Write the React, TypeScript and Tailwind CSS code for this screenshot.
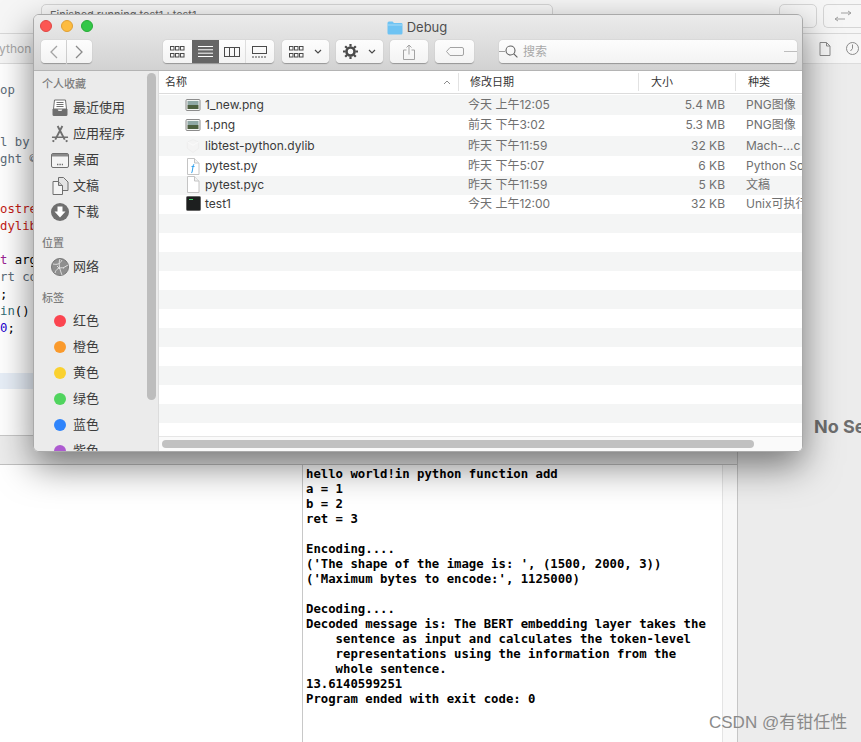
const rows = [
  { name: "1_new.png", date: "今天 上午12:05", size: "5.4 MB", kind: "PNG图像", icon: "img", h: "h-[20px]", alt: true },
  { name: "1.png", date: "前天 下午3:02", size: "5.3 MB", kind: "PNG图像", icon: "img", h: "h-[21px] pb-[2px]", alt: false },
  { name: "libtest-python.dylib", date: "昨天 下午11:59", size: "32 KB", kind: "Mach-…c", icon: "lib", h: "h-[20px]", alt: true },
  { name: "pytest.py", date: "昨天 下午5:07", size: "6 KB", kind: "Python So", icon: "py", h: "h-[20px]", alt: false },
  { name: "pytest.pyc", date: "昨天 下午11:59", size: "5 KB", kind: "文稿", icon: "doc", h: "h-[19px] pb-[2px]", alt: true },
  { name: "test1", date: "今天 上午12:00", size: "32 KB", kind: "Unix可执行", icon: "term", h: "h-[19px] pb-[2px]", alt: false },
]

const tags = [
  { label: "红色", color: "bg-[#fb4550]" },
  { label: "橙色", color: "bg-[#fa9a2c]" },
  { label: "黄色", color: "bg-[#fad12f]" },
  { label: "绿色", color: "bg-[#50d45e]" },
  { label: "蓝色", color: "bg-[#2f84fb]" },
  { label: "紫色", color: "bg-[#ad5bd0]" },
]

const FileIcon = ({ type }: { type: string }) => {
  if (type === "img")
    return (
      <svg width="16" height="14" viewBox="0 0 16 14">
        <rect x="1" y="1.5" width="14" height="11" rx="1" fill="#f2f2f2" stroke="#8c8c8c" />
        <rect x="2.5" y="3" width="11" height="4" fill="#8fa7a5" />
        <rect x="2.5" y="7" width="11" height="4" fill="#4d5f3f" />
      </svg>
    )
  if (type === "lib")
    return (
      <svg width="20" height="18" viewBox="0 0 20 18">
        <path d="M10 1l7 3v8l-7 5-7-5V4z" fill="#f4f4f4" stroke="#ececec" />
        <path d="M3 4l7 4 7-4" fill="none" stroke="#fbfbfb" />
      </svg>
    )
  if (type === "term")
    return (
      <svg width="15" height="15" viewBox="0 0 15 15">
        <rect x="0.5" y="0.5" width="14" height="14" rx="1" fill="#1d1f1f" stroke="#666" />
        <rect x="3" y="3" width="4" height="1" fill="#45d36a" />
      </svg>
    )
  return (
    <svg width="14" height="17" viewBox="0 0 14 17">
      <path d="M1.5.5h7l4.500 4.500v11.500h-11.500z" fill="#fff" stroke="#c4c4c4" />
      <path d="M8.500.5v4.500h4.500" fill="#f2f2f2" stroke="#c4c4c4" />
      {type === "py" && <path d="M8.200 6.500c-1 0-1 1-1.200 2l-.8 5c-.1.8-.4 1.200-1 1.200M5.500 8.500h3" fill="none" stroke="#3aa6ee" strokeWidth="1.100" />}
    </svg>
  )
}

const SideIcon = ({ type }: { type: string }) => {
  const c = "#6f6f6f"
  if (type === "recent")
    return (
      <svg width="18" height="18" viewBox="0 0 18 18">
        <path d="M3.500 1h11l1 9h-13z" fill="#fff" stroke={c} />
        <path d="M5.500 3.500h7M5.500 5.500h7M5.500 7.500h7" stroke={c} />
        <path d="M1.500 10h5l1 2h3l1-2h5v5.500a1.500 1.500 0 0 1-1.500 1.500h-12a1.500 1.500 0 0 1-1.500-1.500z" fill={c} />
      </svg>
    )
  if (type === "apps")
    return (
      <svg width="19" height="18" viewBox="0 0 19 18">
        <path d="M7 0.500l7.500 14.500M12 0.500L4.500 15" stroke={c} strokeWidth="2" />
        <path d="M1 12.500h17" stroke={c} strokeWidth="1.600" />
        <circle cx="2.500" cy="16.500" r="1.200" fill={c} />
        <circle cx="16.500" cy="16.500" r="1.200" fill={c} />
      </svg>
    )
  if (type === "desktop")
    return (
      <svg width="18" height="15" viewBox="0 0 18 15">
        <rect x="0.5" y="0.5" width="17" height="14" rx="1.500" fill="#f4f4f4" stroke={c} />
        <rect x="1" y="1" width="16" height="2.500" fill="#8a8a8a" />
        <path d="M6 11.500h6" stroke={c} strokeWidth="1.400" strokeDasharray="1.400 1" />
      </svg>
    )
  if (type === "docs")
    return (
      <svg width="17" height="18" viewBox="0 0 17 18">
        <path d="M6.500.5h5l4.500 4.500v8.500h-9.500z" fill="#e4e4e4" stroke={c} />
        <path d="M1 4.500h5.500l4 4v9h-9.500z" fill="#f4f4f4" stroke={c} />
        <path d="M6.500 4.500v4h4" fill="#ccc" stroke={c} />
      </svg>
    )
  if (type === "down")
    return (
      <svg width="18" height="18" viewBox="0 0 18 18">
        <circle cx="9" cy="9" r="9" fill={c} />
        <path d="M6.500 3.500h5v5h3L9 14.500 3.500 8.500h3z" fill="#fff" />
      </svg>
    )
  return (
    <svg width="18" height="18" viewBox="0 0 18 18">
      <circle cx="9" cy="9" r="8.500" fill="#8f8f8f" stroke="#777" />
      <path d="M2 6c4 1 7 0 9-4M4 15c1-4 4-6 9-5M9 1c-2 5 0 11 2 16M12 10l5-3M6 8l3 3" fill="none" stroke="#e6e6e6" strokeWidth="0.9" />
    </svg>
  )
}

const Favorite = ({ type, label }: { type: string; label: string }) => (
  <div className="h-[26px] flex items-center pl-[17px] gap-[4px] text-[13px] text-[#3c3c3c]">
    <div className="w-[18px] h-[18px] flex items-center justify-center">
      <SideIcon type={type} />
    </div>
    <span>{label}</span>
  </div>
)

const Sidebar = () => (
  <div className="w-[125px] h-full relative bg-[#ebebeb] border-r border-[#dcdcdc] overflow-hidden shrink-0">
    <div className="pt-[5px] pl-[8px] text-[11px] leading-[16px] font-medium text-[#7d7d7d]">个人收藏</div>
    <div className="mt-[3px]">
      <Favorite type="recent" label="最近使用" />
      <Favorite type="apps" label="应用程序" />
      <Favorite type="desktop" label="桌面" />
      <Favorite type="docs" label="文稿" />
      <Favorite type="down" label="下载" />
    </div>
    <div className="mt-[10px] pl-[8px] text-[11px] leading-[16px] font-medium text-[#7d7d7d]">位置</div>
    <div className="mt-[3px]">
      <Favorite type="net" label="网络" />
    </div>
    <div className="mt-[10px] pl-[8px] text-[11px] leading-[16px] font-medium text-[#7d7d7d]">标签</div>
    <div className="mt-[2px]">
      {tags.map((t) => (
        <div key={t.label} className="h-[26px] flex items-center pl-[20px] gap-[7px] text-[13px] text-[#3c3c3c]">
          <div className={`w-[12px] h-[12px] rounded-full ${t.color}`}></div>
          <span>{t.label}</span>
        </div>
      ))}
    </div>
    <div className="absolute left-[113px] top-[2px] w-[9px] h-[327px] rounded-full bg-[#bdbdbd]"></div>
  </div>
)

const ToolBtn = ({ className, children }: { className: string; children?: React.ReactNode }) => (
  <div className={`h-[23px] bg-gradient-to-b from-[#fdfdfd] to-[#f3f3f3] rounded-[4px] shadow-[0_0.5px_1px_rgba(0,0,0,0.3)] flex items-center justify-center shrink-0 ${className}`}>
    {children}
  </div>
)

const Grid = ({ color = "#4a4a4a" }: { color?: string }) => (
  <svg width="15" height="12" viewBox="0 0 15 12" fill="none" stroke={color}>
    {[0.5, 5.5, 10.5].map((x) => [0.5, 7.5].map((y) => <rect key={`${x}${y}`} x={x} y={y} width="3.500" height="3.500" />))}
  </svg>
)

const Chevron = () => (
  <svg width="8" height="5" viewBox="0 0 8 5" fill="none" stroke="#4a4a4a" strokeWidth="1.200">
    <path d="M1 1l3 3 3-3" />
  </svg>
)

const Gear = () => (
  <svg width="15" height="15" viewBox="0 0 15 15">
    <circle cx="7.500" cy="7.500" r="4" fill="none" stroke="#4a4a4a" strokeWidth="2.600" />
    <path d="M7.500 0v15M0 7.500h15M2.200 2.200l10.600 10.600M12.800 2.200L2.200 12.800" stroke="#4a4a4a" strokeWidth="2.200" strokeDasharray="2.600 9.800" />
  </svg>
)

const FinderToolbar = () => (
  <div className="h-[56px] bg-gradient-to-b from-[#ebebeb] to-[#d2d2d2] border-b border-[#b4b4b4] shrink-0">
    <div className="h-[24px] relative flex items-center justify-center gap-[4px] text-[13px] text-[#4f4f4f] pr-[2px]">
      <div className="absolute left-[6px] top-[5px] w-[12px] h-[12px] rounded-full bg-[#fc5753] border border-[#df4744]"></div>
      <div className="absolute left-[27px] top-[5px] w-[12px] h-[12px] rounded-full bg-[#fdbc40] border border-[#de9f34]"></div>
      <div className="absolute left-[47px] top-[5px] w-[12px] h-[12px] rounded-full bg-[#33c748] border border-[#27aa35]"></div>
      <svg width="16" height="14" viewBox="0 0 16 14" className="mt-[2px]">
        <path d="M0.5 2a1.500 1.500 0 0 1 1.500-1.500h3.500l1.500 1.500h7.500a1.500 1.500 0 0 1 1 1v9a1.500 1.500 0 0 1-1.500 1.500h-12a1.500 1.500 0 0 1-1.500-1.500z" fill="#6ec3f3" />
        <path d="M0.5 4h15" stroke="#a6dcf8" />
      </svg>
      <span className="mt-[2px]">Debug</span>
    </div>
    <div className="flex items-center pl-[7px] h-[25px]">
      <ToolBtn className="w-[25px] rounded-r-none">
        <svg width="9" height="14" viewBox="0 0 9 14" fill="none" stroke="#a3a3a3" strokeWidth="1.300"><path d="M8 1L2 7l6 6" /></svg>
      </ToolBtn>
      <ToolBtn className="w-[25px] ml-[1px] rounded-l-none">
        <svg width="9" height="14" viewBox="0 0 9 14" fill="none" stroke="#8a8a8a" strokeWidth="1.300"><path d="M1 1l6 6-6 6" /></svg>
      </ToolBtn>
      <ToolBtn className="w-[111px] ml-[71px] !justify-start overflow-hidden">
        <div className="w-[29px] h-full flex items-center justify-center"><Grid /></div>
        <div className="w-[27px] h-full flex items-center justify-center bg-[#666]">
          <svg width="15" height="11" viewBox="0 0 15 11" stroke="#fff"><path d="M0 .5h15M0 3.800h15M0 7.200h15M0 10.500h15" /></svg>
        </div>
        <div className="w-[27px] h-full flex items-center justify-center border-r border-[#dedede]">
          <svg width="16" height="10" viewBox="0 0 16 10" fill="none" stroke="#4a4a4a"><rect x="0.5" y="0.5" width="15" height="9" /><path d="M5.500 0v10M10.500 0v10" /></svg>
        </div>
        <div className="w-[27px] h-full flex items-center justify-center">
          <svg width="15" height="12" viewBox="0 0 15 12" fill="none" stroke="#4a4a4a"><rect x="0.5" y="0.5" width="14" height="7" /><path d="M0 11h15" strokeDasharray="2 1" /></svg>
        </div>
      </ToolBtn>
      <ToolBtn className="w-[47px] ml-[8px] gap-[10px]"><Grid /><Chevron /></ToolBtn>
      <ToolBtn className="w-[47px] ml-[7px] gap-[10px]"><Gear /><Chevron /></ToolBtn>
      <ToolBtn className="w-[38px] ml-[7px]">
        <svg width="12" height="16" viewBox="0 0 12 16" fill="none" stroke="#a3a3a3"><path d="M3.500 6H.5v9.500h11V6h-3M6 10.500V1M3.500 3.500L6 1l2.500 2.500" /></svg>
      </ToolBtn>
      <ToolBtn className="w-[39px] ml-[7px]">
        <svg width="18" height="9" viewBox="0 0 18 9" fill="none" stroke="#a3a3a3"><path d="M4 .5h12a1.500 1.500 0 0 1 1.500 1.500v5a1.500 1.500 0 0 1-1.500 1.500H4L.5 4.500z" /></svg>
      </ToolBtn>
      <ToolBtn className="w-[298px] ml-[25px] !justify-start relative">
        <div className="absolute left-0 top-[11px] w-[6px] h-px bg-[#9d9d9d]"></div>
        <div className="absolute right-0 top-[11px] w-[13px] h-px bg-[#bdbdbd]"></div>
        <svg width="13" height="13" viewBox="0 0 13 13" fill="none" stroke="#5f5f5f" strokeWidth="1.100" className="ml-[6px]"><circle cx="5.500" cy="5.500" r="4.500" /><path d="M8.800 8.800l3.600 3.600" /></svg>
        <span className="ml-[5px] text-[12px] text-[#a8a8a8]">搜索</span>
      </ToolBtn>
    </div>
  </div>
)

const FileList = () => (
  <div className="flex-1 min-w-0 h-full flex flex-col bg-white overflow-hidden">
    <div className="h-[23px] shrink-0 flex items-center text-[11px] text-[#333] border-b border-[#dcdcdc] bg-white">
      <div className="w-[300px] shrink-0 pl-[6px] h-[18px] flex items-center justify-between pr-[7px] border-r border-[#e2e2e2]">
        <span>名称</span>
        <svg width="8" height="5" viewBox="0 0 8 5" fill="none" stroke="#8c8c8c"><path d="M1 4l3-3 3 3" /></svg>
      </div>
      <div className="w-[180px] shrink-0 pl-[11px] h-[18px] flex items-center border-r border-[#e2e2e2]">修改日期</div>
      <div className="w-[97px] shrink-0 pl-[12px] h-[18px] flex items-center border-r border-[#e2e2e2]">大小</div>
      <div className="pl-[12px]">种类</div>
    </div>
    <div className="h-[1px] shrink-0 bg-white"></div>
    <div className="flex-1 overflow-hidden">
      {rows.map((r) => (
        <div key={r.name} className={`${r.h} flex items-center text-[12px] whitespace-nowrap overflow-hidden ${r.alt ? "bg-[#f4f5f5]" : "bg-white"}`}>
          <div className="w-[300px] shrink-0 flex items-center pl-[26px] text-[#3a3a3a]">
            <div className="w-[16px] h-[16px] flex items-center justify-center"><FileIcon type={r.icon} /></div>
            <span className="ml-[4px]">{r.name}</span>
          </div>
          <div className="w-[181px] shrink-0 pl-[9px] text-[#707070]">{r.date}</div>
          <div className="w-[85px] shrink-0 text-right text-[#707070]">{r.size}</div>
          <div className="pl-[21px] shrink-0 text-[#707070]">{r.kind}</div>
        </div>
      ))}
      {Array.from({ length: 12 }).map((_, i) => (
        <div key={i} className={`h-[19px] ${i % 2 === 0 ? "bg-[#f4f5f5]" : "bg-white"}`}></div>
      ))}
    </div>
    <div className="h-[15px] shrink-0 bg-[#fafafa] border-t border-[#e6e6e6] flex items-center pl-[3px]">
      <div className="w-[592px] h-[8px] rounded-full bg-[#c1c1c1]"></div>
    </div>
  </div>
)

const FinderWindow = () => (
  <div className="absolute left-[33px] top-[14px] w-[770px] h-[438px] rounded-[6px] overflow-hidden flex flex-col border border-[#a9a9a9] shadow-[0_14px_36px_rgba(0,0,0,0.5)]">
    <FinderToolbar />
    <div className="flex-1 min-h-0 flex">
      <Sidebar />
      <FileList />
    </div>
  </div>
)

const CodeLine = ({ className, children }: { className: string; children: React.ReactNode }) => (
  <div className={`absolute left-0 whitespace-pre ${className}`}>{children}</div>
)

const Editor = () => (
  <div className="h-[372px] relative bg-white overflow-hidden font-['DejaVu_Sans_Mono',monospace] text-[12.3px] leading-[17px] border-b border-[#c8c8c8]">
    <div className="absolute left-0 right-0 top-[309px] h-[16px] bg-[#e8eff8]"></div>
    <CodeLine className="top-[18px] text-[#5d6c79]">op</CodeLine>
    <CodeLine className="top-[70px] text-[#5d6c79]">l by v</CodeLine>
    <CodeLine className="top-[87px] text-[#5d6c79]">ght ©</CodeLine>
    <CodeLine className="top-[137px] text-[#c41a16]">ostre</CodeLine>
    <CodeLine className="top-[154px] text-[#c41a16]">dylib</CodeLine>
    <CodeLine className="top-[188px] text-[#9b2393]">t <span className="text-[#000]">arg</span></CodeLine>
    <CodeLine className="top-[205px] text-[#5d6c79]">rt co</CodeLine>
    <CodeLine className="top-[222px] text-[#000]">;</CodeLine>
    <CodeLine className="top-[239px] text-[#326d74]">in<span className="text-[#000]">()</span></CodeLine>
    <CodeLine className="top-[256px] text-[#1c00cf]">0<span className="text-[#000]">;</span></CodeLine>
  </div>
)

const Console = () => (
  <div className="flex-1 min-h-0 flex bg-white">
    <div className="w-[303px] shrink-0 border-r border-[#c8c8c8]"></div>
    <div className="w-[419px] shrink-0 pt-[2px] pl-[3px] font-['DejaVu_Sans_Mono',monospace] font-bold text-[12.3px] leading-[15px] text-black whitespace-pre">
      {`hello world!in python function add
a = 1
b = 2
ret = 3

Encoding....
('The shape of the image is: ', (1500, 2000, 3))
('Maximum bytes to encode:', 1125000)

Decoding....
Decoded message is: The BERT embedding layer takes the
    sentence as input and calculates the token-level
    representations using the information from the
    whole sentence.
13.6140599251
Program ended with exit code: 0`}
    </div>
    <div className="flex-1 bg-[#f8f8f8] border-l border-[#e4e4e4]"></div>
  </div>
)

const XcodeTop = () => (
  <>
    <div className="h-[34px] bg-[#f6f6f6] border-b border-[#d8d8d8] flex items-start pt-[4px] shrink-0">
      <div className="w-[512px] h-[24px] ml-[41px] rounded-[5px] border border-[#d5d5d5] bg-[#f8f8f8] px-[8px] text-[11px] leading-[20px] text-[#666] shrink-0">
        Finished running test1 : test1
      </div>
      <div className="w-[38px] h-[24px] ml-[226px] rounded-[5px] border border-[#d5d5d5] flex items-center justify-center text-[14px] text-[#666] shrink-0">+</div>
      <div className="w-[38px] h-[24px] ml-[6px] rounded-l-[5px] border border-[#d5d5d5] border-r-0 flex items-center justify-center shrink-0">
        <svg width="18" height="14" viewBox="0 0 18 14" fill="none" stroke="#a0a0a0"><path d="M1 10h10M1 10l3-2M1 10l3 2M7 4h10M17 4l-3-2M17 4l-3 2" /></svg>
      </div>
    </div>
    <div className="h-[30px] bg-[#f6f6f6] border-b border-[#dcdcdc] flex items-center justify-between shrink-0 text-[12px] text-[#a8a8a8]">
      <span className="-ml-[8px]">python</span>
      <div className="flex items-center gap-[15px] pr-[2px]">
        <svg width="12" height="14" viewBox="0 0 12 14" fill="none" stroke="#8a8a8a"><path d="M1 .5h6.500l3.500 3.500v9.500h-10zM7.500 .5v3.500h3.500" /></svg>
        <svg width="13" height="13" viewBox="0 0 13 13" fill="none" stroke="#8a8a8a"><circle cx="6.500" cy="6.500" r="6" /><path d="M6.500 2.500v4l-2 2.500" /></svg>
      </div>
    </div>
  </>
)

export default function App() {
  return (
    <div className="relative w-[861px] h-[742px] overflow-hidden bg-white flex flex-col font-['Inter','Noto_Sans_CJK_SC',sans-serif]">
      <XcodeTop />
      <div className="flex-1 min-h-0 flex">
        <div className="w-[737px] shrink-0 flex flex-col">
          <Editor />
          <div className="h-[29px] bg-[#ececec] border-b border-[#c0c0c0] shrink-0"></div>
          <Console />
        </div>
        <div className="flex-1 bg-[#ececec] border-l border-[#c6c6c6] flex items-center pl-[76px]">
          <span className="mt-[46px] whitespace-nowrap text-[18px] font-bold text-[#6e6e6e]">No Se</span>
        </div>
      </div>
      <FinderWindow />
      <div className="absolute left-[709px] top-[713px] text-[17px] leading-[20px] text-[#8a8a8a] whitespace-nowrap font-['Liberation_Sans','Noto_Sans_CJK_SC',sans-serif]">
        CSDN @有钳任性
      </div>
    </div>
  )
}
